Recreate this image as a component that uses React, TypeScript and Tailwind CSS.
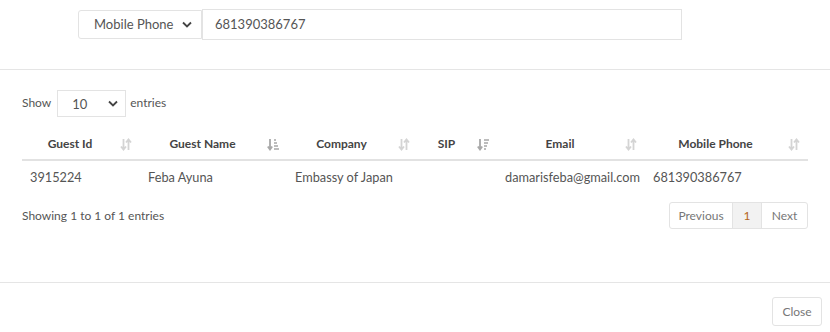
import React from "react";

const font = { fontFamily: "Lato, 'Noto Sans', sans-serif" };

function SortBoth() {
  return (
    <svg width="12" height="13" viewBox="0 0 12 13" className="text-[#d4d4d4]">
      <path d="M3.5 1v10M1 8.5l2.5 3 2.5-3" stroke="currentColor" strokeWidth="1.8" fill="none" />
      <path d="M8.5 12V2M6 4.5l2.5-3 2.5 3" stroke="currentColor" strokeWidth="1.8" fill="none" />
    </svg>
  );
}

function SortAsc() {
  return (
    <svg width="12" height="13" viewBox="0 0 12 13" className="text-[#a8a8a8]">
      <path d="M3 1v10M0.8 8.5l2.2 3 2.2-3" stroke="currentColor" strokeWidth="1.8" fill="none" />
      <path d="M7 2h2M7 5h3M7 8h4M7 11h5" stroke="currentColor" strokeWidth="1.5" />
    </svg>
  );
}

function SortDesc() {
  return (
    <svg width="12" height="13" viewBox="0 0 12 13" className="text-[#a8a8a8]">
      <path d="M3 1v10M0.8 8.5l2.2 3 2.2-3" stroke="currentColor" strokeWidth="1.8" fill="none" />
      <path d="M7 2h5M7 5h4M7 8h3M7 11h2" stroke="currentColor" strokeWidth="1.5" />
    </svg>
  );
}

function Chevron() {
  return (
    <svg width="10" height="7" viewBox="0 0 10 7">
      <path d="M1 1.5l4 4 4-4" stroke="#444" strokeWidth="1.8" fill="none" />
    </svg>
  );
}

const columns = [
  { name: "Guest Id", w: "w-[118px]", icon: <SortBoth /> },
  { name: "Guest Name", w: "w-[147px]", icon: <SortAsc /> },
  { name: "Company", w: "w-[131px]", icon: <SortBoth /> },
  { name: "SIP", w: "w-[79px]", icon: <SortDesc /> },
  { name: "Email", w: "w-[148px]", icon: <SortBoth /> },
  { name: "Mobile Phone", w: "w-[163px]", icon: <SortBoth /> },
];

const row = ["3915224", "Feba Ayuna", "Embassy of Japan", "", "damarisfeba@gmail.com", "681390386767"];

export default function App() {
  return (
    <div className="w-[830px] h-[332px] bg-white text-[#555] overflow-hidden flex flex-col" style={font}>
      {/* search bar */}
      <div className="h-[70px] border-b border-[#e5e5e5] flex items-start pt-[9px] pl-[78px]">
        <div className="mt-[1px] h-[29px] w-[124px] border border-[#e3e3e3] rounded-l-[3px] flex items-center justify-between pl-[15px] pr-[9px] text-[13px] text-[#555]">
          <span>Mobile Phone</span>
          <Chevron />
        </div>
        <div className="h-[31px] w-[480px] border border-[#e3e3e3] flex items-center pl-[12px] text-[13px] text-[#555]">
          681390386767
        </div>
      </div>

      {/* table area */}
      <div className="px-[22px] pt-[19px] h-[212px]">
        <div className="flex items-center text-[12px] text-[#555]">
          <span>Show</span>
          <div className="ml-[6px] mr-[4px] h-[27px] w-[69px] border border-[#e3e3e3] flex items-center justify-between pl-[14px] pr-[7px] text-[13px] mt-[1px]">
            <span className="mt-[3px]">10</span>
            <Chevron />
          </div>
          <span>entries</span>
        </div>

        <div className="mt-[11px] w-[786px]">
          <div className="flex h-[33px] border-b-2 border-[#e2e2e2]">
            {columns.map((c) => (
              <div key={c.name} className={`${c.w} relative flex items-center justify-center text-[12px] font-bold text-[#444]`}>
                <span className="pr-[22px]">{c.name}</span>
                <span className="absolute right-[8px] top-[10px]">{c.icon}</span>
              </div>
            ))}
          </div>
          <div className="flex h-[34px] items-center text-[12.75px] text-[#555]">
            {row.map((v, i) => (
              <div key={i} className={`${columns[i].w} px-[8px] whitespace-nowrap`}>{v}</div>
            ))}
          </div>
        </div>

        <div className="flex items-center justify-between mt-[7px]">
          <span className="text-[12px] text-[#555]">Showing 1 to 1 of 1 entries</span>
          <div className="flex h-[27px] border border-[#e3e3e3] rounded-[3px] text-[12px] text-[#777]">
            <div className="w-[63px] flex items-center justify-center border-r border-[#e3e3e3]">Previous</div>
            <div className="w-[29px] flex items-center justify-center bg-[#f2f2f2] text-[#b5651d] border-r border-[#e3e3e3]">1</div>
            <div className="w-[45px] flex items-center justify-center">Next</div>
          </div>
        </div>
      </div>

      {/* footer */}
      <div className="border-t border-[#e5e5e5] flex justify-end pt-[14px] pr-[8px]">
        <div className="h-[29px] w-[50px] border border-[#e3e3e3] rounded-[3px] flex items-center justify-center text-[12px] text-[#777]">
          Close
        </div>
      </div>
    </div>
  );
}
